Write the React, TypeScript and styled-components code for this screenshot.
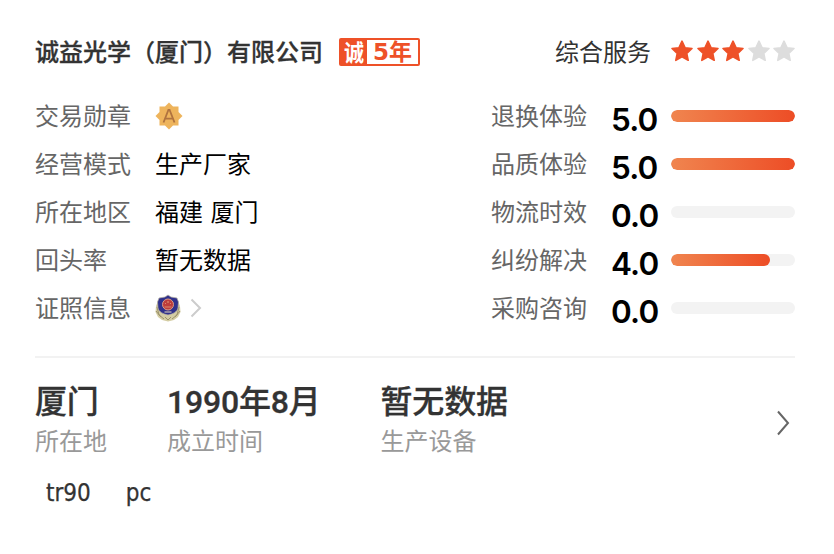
import styled, { createGlobalStyle } from "styled-components";

const GlobalStyle = createGlobalStyle`
  body {
    margin: 0;
    background-color: #ffffff;
    font-family: "Noto Sans CJK SC", sans-serif;
  }
`;

const Card = styled.main`
  display: flex;
  flex-direction: column;
  box-sizing: border-box;
  width: 834px;
  height: 554px;
  padding: 28px 39px 0 35px;
  overflow: hidden;
  color: #333333;
  font-size: 24px;
  line-height: 48px;
`;

const Header = styled.header`
  display: flex;
  align-items: center;
  height: 48px;
  margin-bottom: 16px;
`;

const CompanyName = styled.h1`
  margin: 0;
  padding-bottom: 2px;
  font-size: 24px;
  font-weight: 500;
  white-space: nowrap;
  -webkit-text-stroke: 0.3px #333333;
`;

const YearBadge = styled.div`
  display: flex;
  box-sizing: border-box;
  width: 81px;
  height: 28px;
  margin-left: 16px;
  border: 2px solid #ee5128;
  border-radius: 2px;
  background-color: #ee5128;
  line-height: 24px;
  font-weight: 700;
`;

const BadgeMark = styled.span`
  width: 26px;
  color: #ffffff;
  font-size: 21px;
  line-height: 22px;
  text-align: center;
  transform: scale(0.95, 1.08);
`;

const BadgeYears = styled.span`
  flex: 1;
  background-color: #ffffff;
  color: #ee5128;
  font-family: "DejaVu Sans", "Noto Sans CJK SC", sans-serif;
  font-size: 23px;
  text-align: center;
  white-space: nowrap;
`;

const ServiceLabel = styled.span`
  margin-left: auto;
  margin-right: 19px;
  padding-bottom: 2px;
`;

const Stars = styled.div`
  display: flex;
  justify-content: space-between;
  width: 126px;
  margin-right: -1px;
  margin-bottom: 2px;
`;

const Star = styled.svg<{ $active: boolean }>`
  width: 24px;
  height: 24px;
  fill: ${(props) => (props.$active ? "#ee5128" : "#dddddd")};
  stroke: ${(props) => (props.$active ? "#ee5128" : "#dddddd")};
  stroke-width: 1.6px;
  stroke-linejoin: round;
`;

const Details = styled.section`
  display: flex;
  justify-content: space-between;
  padding-bottom: 24px;
  border-bottom: 2px solid #f2f2f2;
`;

const Column = styled.div`
  display: flex;
  flex-direction: column;
`;

const Row = styled.div`
  display: flex;
  align-items: center;
  height: 48px;
`;

const RowLabel = styled.span`
  width: 120px;
  padding-bottom: 2px;
  color: #666666;
`;

const RowText = styled.span`
  padding-bottom: 2px;
  color: #000000;
  white-space: nowrap;
  word-spacing: 2px;
`;

const RowIcons = styled.span`
  display: flex;
  align-items: center;
`;

const Score = styled.span`
  width: 60px;
  padding-top: 8px;
  color: #000000;
  font-family: Inter, sans-serif;
  font-size: 31.5px;
  font-weight: 600;
  letter-spacing: -0.8px;
`;

const Track = styled.div`
  width: 124px;
  height: 12px;
  border-radius: 6px;
  background-color: #f3f3f3;
  overflow: hidden;
`;

const Fill = styled.div`
  height: 100%;
  border-radius: 6px;
  background-image: linear-gradient(90deg, #f0854f, #ed4d26);
`;

const Summary = styled.section`
  display: flex;
  align-items: center;
  gap: 60px;
  padding-top: 22px;
`;

const Fact = styled.div`
  display: flex;
  flex-direction: column;
`;

const FactValue = styled.strong`
  height: 44px;
  font-family: Roboto, "Noto Sans CJK SC", sans-serif;
  font-size: 32px;
  font-weight: 500;
  line-height: 44px;
  letter-spacing: -0.2px;
  -webkit-text-stroke: 0.3px #333333;
`;

const FactLabel = styled.span`
  color: #999999;
  line-height: 32px;
`;

const MoreArrow = styled.svg`
  width: 14px;
  height: 28px;
  margin-top: 9px;
  margin-left: auto;
  margin-right: 5px;
`;

const Tags = styled.div`
  display: flex;
  gap: 35px;
  padding: 13px 11px 0;
  font-family: "DejaVu Sans Condensed", "DejaVu Sans", sans-serif;
  font-stretch: condensed;
  -webkit-text-stroke: 0.25px #333333;
`;

const MedalIcon = () => (
  <svg width="28" height="28" viewBox="0 0 28 28">
    <path
      fill="#eeb45c"
      d="M14 0.5L18 4.5H23.5V10L27.5 14L23.5 18V23.5H18L14 27.5L10 23.5H4.5V18L0.5 14L4.5 10V4.5H10Z"
    />
    <path
      d="M8.5 20.5L13.4 8H14.6L19.5 20.5M10.3 16.7H17.7"
      fill="none"
      stroke="#b0733f"
      strokeWidth="1.8"
    />
  </svg>
);

const PoliceIcon = () => (
  <svg width="26" height="28" viewBox="0 0 26 28">
    <path
      d="M3 7L1 12L0.5 18L3 23L7 26L13 27.5L19 26L23 23L25.5 18L25 12L23 7Z"
      fill="#d4cda4"
    />
    <path
      d="M2 13L4 21L9 25M24 13L22 21L17 25M1 17L6 23M25 17L20 23M10 23L13 26L16 23"
      fill="none"
      stroke="#9c936c"
      strokeWidth="1"
    />
    <path
      d="M13 1L16 3L22 4L23.5 8L23 14C22 18 18 20 13 21C8 20 4 18 3 14L2.5 8L4 4L10 3Z"
      fill="#30318b"
      stroke="#b9b3a4"
      strokeWidth="0.7"
    />
    <circle cx="13" cy="10.5" r="5.5" fill="#bd3d3c" stroke="#d99a86" />
    <path
      d="M9.5 13H16.5M13 7V9M10 9.5H11M15 9.5H16"
      stroke="#d98c6c"
      strokeWidth="1.2"
    />
    <path d="M9.5 18H16.5" stroke="#c9bfb4" strokeWidth="1.2" />
  </svg>
);

const LicenseArrow = styled.svg`
  width: 12px;
  height: 20px;
  margin-left: 9px;
`;

const scores = [
  { label: "退换体验", value: 5 },
  { label: "品质体验", value: 5 },
  { label: "物流时效", value: 0 },
  { label: "纠纷解决", value: 4 },
  { label: "采购咨询", value: 0 },
];

const facts = [
  { value: "厦门", label: "所在地" },
  { value: "1990年8月", label: "成立时间" },
  { value: "暂无数据", label: "生产设备" },
];

const details = [
  {
    label: "交易勋章",
    value: (
      <RowIcons>
        <MedalIcon />
      </RowIcons>
    ),
  },
  { label: "经营模式", value: <RowText>生产厂家</RowText> },
  { label: "所在地区", value: <RowText>福建 厦门</RowText> },
  { label: "回头率", value: <RowText>暂无数据</RowText> },
  {
    label: "证照信息",
    value: (
      <RowIcons>
        <PoliceIcon />
        <LicenseArrow viewBox="0 0 12 20">
          <path
            d="M1.5 1.5L10 10L1.5 18.5"
            fill="none"
            stroke="#cccccc"
            strokeWidth="2"
          />
        </LicenseArrow>
      </RowIcons>
    ),
  },
];

const tags = ["tr90", "pc"];

const App = () => {
  const renderedStars = [1, 2, 3, 4, 5].map((star) => (
    <Star key={star} viewBox="0 0 24 24" $active={star <= 3}>
      <path d="M12 2.2L15 8.7L22 9.5L16.8 14.3L18.2 21.3L12 17.8L5.8 21.3L7.2 14.3L2 9.5L9 8.7Z" />
    </Star>
  ));

  return (
    <Card>
      <GlobalStyle />
      <Header>
        <CompanyName>诚益光学（厦门）有限公司</CompanyName>
        <YearBadge>
          <BadgeMark>诚</BadgeMark>
          <BadgeYears>5年</BadgeYears>
        </YearBadge>
        <ServiceLabel>综合服务</ServiceLabel>
        <Stars>{renderedStars}</Stars>
      </Header>

      <Details>
        <Column>
          {details.map(({ label, value }) => (
            <Row key={label}>
              <RowLabel>{label}</RowLabel>
              {value}
            </Row>
          ))}
        </Column>
        <Column>
          {scores.map(({ label, value }) => (
            <Row key={label}>
              <RowLabel>{label}</RowLabel>
              <Score>{value.toFixed(1)}</Score>
              <Track>
                <Fill style={{ width: `${value * 20}%` }} />
              </Track>
            </Row>
          ))}
        </Column>
      </Details>

      <Summary>
        {facts.map(({ value, label }) => (
          <Fact key={label}>
            <FactValue>{value}</FactValue>
            <FactLabel>{label}</FactLabel>
          </Fact>
        ))}
        <MoreArrow viewBox="0 0 14 28">
          <path
            d="M2 2.5L12 14L2 25.5"
            fill="none"
            stroke="#666666"
            strokeWidth="2"
          />
        </MoreArrow>
      </Summary>

      <Tags>
        {tags.map((tag) => (
          <span key={tag}>{tag}</span>
        ))}
      </Tags>
    </Card>
  );
};

export default App;
